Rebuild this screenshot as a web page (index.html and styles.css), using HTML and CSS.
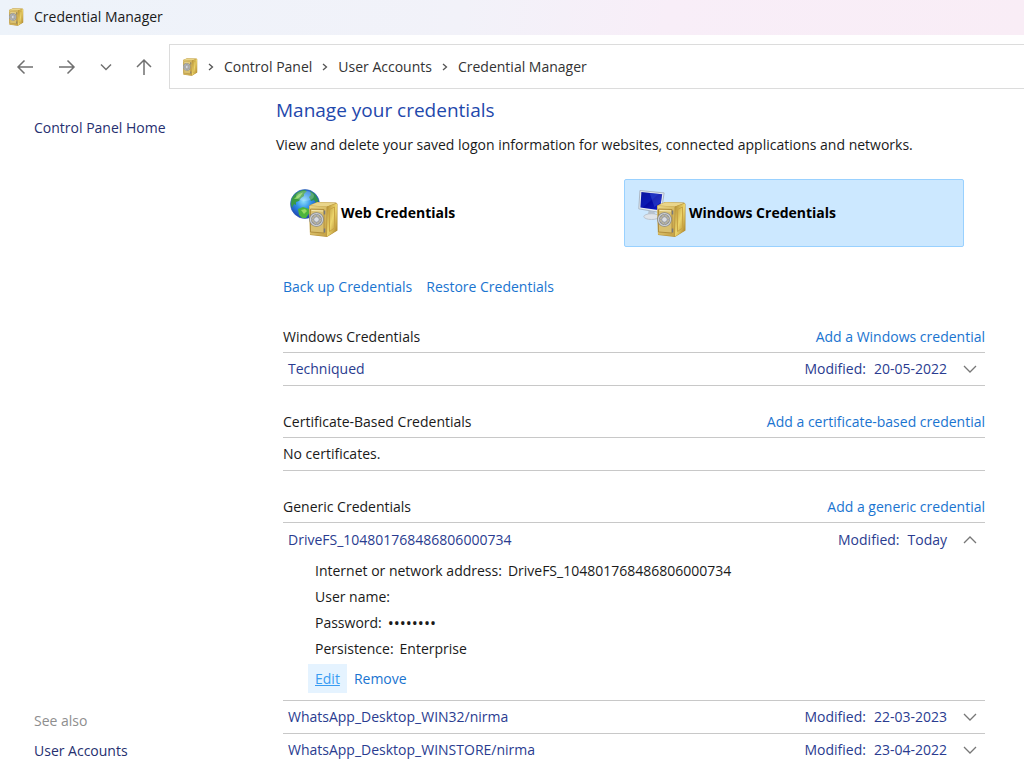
FILE: index.html
```html
<!DOCTYPE html>
<html lang="en">
<head>
  <meta charset="UTF-8">
  <meta name="viewport" content="width=device-width, initial-scale=1.0">
  <title>Credential Manager</title>
  <link rel="stylesheet" href="styles.css">
</head>
<body>

<!-- shared icons -->
<svg class="sprite" aria-hidden="true">
  <defs>
    <linearGradient id="goldFront" x1="0" y1="0" x2="1" y2="1">
      <stop offset="0" stop-color="#ecd98a"/>
      <stop offset="0.5" stop-color="#d8bd66"/>
      <stop offset="1" stop-color="#c4a044"/>
    </linearGradient>
    <linearGradient id="goldSide" x1="0" y1="0" x2="1" y2="1">
      <stop offset="0" stop-color="#b08a30"/>
      <stop offset="0.5" stop-color="#ecd56c"/>
      <stop offset="1" stop-color="#a67b22"/>
    </linearGradient>
    <radialGradient id="ocean" cx="0.45" cy="0.4" r="0.6">
      <stop offset="0" stop-color="#8fe0fa"/>
      <stop offset="0.45" stop-color="#2f8fe8"/>
      <stop offset="1" stop-color="#1d3fae"/>
    </radialGradient>
    <linearGradient id="screen" x1="0" y1="0" x2="1" y2="1">
      <stop offset="0" stop-color="#0a149c"/>
      <stop offset="0.45" stop-color="#0a18b4"/>
      <stop offset="0.5" stop-color="#0509a0"/>
      <stop offset="1" stop-color="#1020cc"/>
    </linearGradient>
  </defs>
  <symbol id="safe" viewBox="0 0 30 36">
    <path d="M1 4 9 0.500 28 1 29.500 2.500V29L19 35.500 2 33.500Z" fill="#b8933c"/>
    <path d="M1.500 4 9.500 0.800 28 1.500 19 5Z" fill="#e9d58a"/>
    <path d="M19 5 29 2V28.700L19 35Z" fill="url(#goldSide)"/>
    <path d="M21.500 8 26.500 5.500V26.500L21.500 30Z" fill="none" stroke="#c9a343"/>
    <path d="M1.500 4.500 18.500 5V34.800L2 33Z" fill="url(#goldFront)"/>
    <path d="M2.500 7.500 16 8V31.500L2.500 30.500Z" fill="#d9c070" stroke="#b28f3c"/>
    <path d="M3.500 9 15 9.500" stroke="#f7ebb4"/>
    <path d="M16.500 9V13M16.500 27V31" stroke="#77787c" stroke-width="1.500"/>
    <circle cx="8.500" cy="18" r="6" fill="#bdb79e" stroke="#85878b" stroke-width="2.600"/>
    <circle cx="8.500" cy="18" r="6" fill="none" stroke="#cdd0d4" stroke-width="1.200"/>
    <path d="M8.500 12.500V23.500M3 18H14M5 14.500 12 21.500M12 14.500 5 21.500" stroke="#a0a3a8"/>
    <circle cx="8.500" cy="18" r="2.800" fill="#d9dce2" stroke="#95989e"/>
  </symbol>
  <symbol id="globe" viewBox="0 0 30 30">
    <circle cx="15" cy="15" r="14.500" fill="url(#ocean)" stroke="#2d5cb4" stroke-width="0.600"/>
    <path d="M1.500 10C4 5 8 2 14 1L17 2 14 5 14 7 11 9 9 12 6 13 6 16 4 15 2 19 1 15Z" fill="#3b9a45"/>
    <path d="M4 10 9 5 13 3.500 10 8 7 10Z" fill="#86d25a"/>
    <path d="M20 1.800 25 5 28.500 11 27 15 24 11 21 12 19 8 21 6Z" fill="#2f9150"/>
    <path d="M8 20 13 18 19 20 20 23 16 29 12 29 9 26Z" fill="#4db43d"/>
    <path d="M11 21 15 20 17 22 14 25Z" fill="#98da62"/>
    <ellipse cx="15" cy="7" rx="9" ry="5" fill="#fff" opacity="0.22"/>
  </symbol>
  <symbol id="monitor" viewBox="0 0 30 32">
    <path d="M11 22 17 23 18 27 10 27Z" fill="#b8c2ce"/>
    <ellipse cx="14" cy="28" rx="8" ry="3" fill="#dfe4ea" stroke="#b9c2cc"/>
    <path d="M2 1 27 3.500 24 24 0.800 20Z" fill="#e6ebf1" stroke="#a9b5c3"/>
    <path d="M3.500 2.500 25 5 22.500 21.500 2.500 18.500Z" fill="url(#screen)"/>
    <path d="M12 3.500 25 5 24 13 17 18Z" fill="#5876ec" opacity="0.3"/>
  </symbol>
  <symbol id="down" viewBox="0 0 14 8">
    <path d="M1 1 7 7 13 1" fill="none" stroke="currentColor" stroke-width="1.300"/>
  </symbol>
  <symbol id="up" viewBox="0 0 14 8">
    <path d="M1 7 7 1 13 7" fill="none" stroke="currentColor" stroke-width="1.300"/>
  </symbol>
  <symbol id="sep" viewBox="0 0 6 8">
    <path d="M1 1 4.500 4 1 7" fill="none" stroke="currentColor" stroke-width="1.300"/>
  </symbol>
</svg>

<header class="titlebar">
  <svg class="icon-safe"><use href="#safe"/></svg>
  <span>Credential Manager</span>
</header>

<nav class="toolbar">
  <div class="nav-buttons">
    <button aria-label="Back"><svg width="18" height="16" viewBox="0 0 18 16"><path d="M17 8H2M8.500 1.500 2 8 8.500 14.500"/></svg></button>
    <button aria-label="Forward"><svg width="18" height="16" viewBox="0 0 18 16"><path d="M1 8H16M9.500 1.500 16 8 9.500 14.500"/></svg></button>
    <button aria-label="Recent locations"><svg width="12" height="8" viewBox="0 0 12 8"><path d="M1 1.500 6 6.500 11 1.500"/></svg></button>
    <button aria-label="Up"><svg width="16" height="18" viewBox="0 0 16 18"><path d="M8 17V2M1 9 8 2 15 9"/></svg></button>
  </div>
  <div class="address">
    <svg class="icon-safe"><use href="#safe"/></svg>
    <svg class="sep"><use href="#sep"/></svg>
    <a href="#">Control Panel</a>
    <svg class="sep"><use href="#sep"/></svg>
    <a href="#">User Accounts</a>
    <svg class="sep"><use href="#sep"/></svg>
    <a href="#">Credential Manager</a>
  </div>
</nav>

<div class="content">
  <aside class="sidebar">
    <a href="#">Control Panel Home</a>
    <div class="see-also">
      <h2>See also</h2>
      <a href="#">User Accounts</a>
    </div>
  </aside>

  <main>
    <h1>Manage your credentials</h1>
    <p class="intro">View and delete your saved logon information for websites, connected applications and networks.</p>

    <div class="vaults">
      <button class="vault">
        <span class="vault-icon"><svg class="globe"><use href="#globe"/></svg><svg class="vault-safe"><use href="#safe"/></svg></span>
        Web Credentials
      </button>
      <button class="vault selected">
        <span class="vault-icon"><svg class="monitor"><use href="#monitor"/></svg><svg class="vault-safe"><use href="#safe"/></svg></span>
        Windows Credentials
      </button>
    </div>

    <div class="tasks">
      <a href="#">Back up Credentials</a>
      <a href="#">Restore Credentials</a>
    </div>

    <section class="group">
      <div class="group-head">
        <h2>Windows Credentials</h2>
        <a href="#">Add a Windows credential</a>
      </div>
      <button class="row">
        <span class="name">Techniqued</span>
        <span>Modified:</span><span>20-05-2022</span>
        <svg class="chevron"><use href="#down"/></svg>
      </button>
    </section>

    <section class="group">
      <div class="group-head">
        <h2>Certificate-Based Credentials</h2>
        <a href="#">Add a certificate-based credential</a>
      </div>
      <p class="empty">No certificates.</p>
    </section>

    <section class="group">
      <div class="group-head">
        <h2>Generic Credentials</h2>
        <a href="#">Add a generic credential</a>
      </div>
      <button class="row open" aria-expanded="true">
        <span class="name">DriveFS_104801768486806000734</span>
        <span>Modified:</span><span>Today</span>
        <svg class="chevron"><use href="#up"/></svg>
      </button>
      <div class="details">
        <dl>
          <div><dt>Internet or network address:</dt><dd>DriveFS_104801768486806000734</dd></div>
          <div><dt>User name:</dt><dd></dd></div>
          <div><dt>Password:</dt><dd class="dots">••••••••</dd></div>
          <div><dt>Persistence:</dt><dd>Enterprise</dd></div>
        </dl>
        <div class="actions">
          <a class="active" href="#">Edit</a>
          <a href="#">Remove</a>
        </div>
      </div>
      <button class="row">
        <span class="name">WhatsApp_Desktop_WIN32/nirma</span>
        <span>Modified:</span><span>22-03-2023</span>
        <svg class="chevron"><use href="#down"/></svg>
      </button>
      <button class="row">
        <span class="name">WhatsApp_Desktop_WINSTORE/nirma</span>
        <span>Modified:</span><span>23-04-2022</span>
        <svg class="chevron"><use href="#down"/></svg>
      </button>
    </section>
  </main>
</div>

</body>
</html>
```

FILE: styles.css
```css
* { box-sizing: border-box; margin: 0; padding: 0; }
body {
  display: flex;
  flex-direction: column;
  height: 100vh;
  overflow: hidden;
  font-family: "Open Sans", "Noto Sans", sans-serif;
  font-size: 14px;
  line-height: 20px;
  color: #1a1a1a;
  background: #fff;
}
a { color: #1a74d0; text-decoration: none; }
button {
  font: inherit;
  color: inherit;
  background: none;
  border: none;
  cursor: pointer;
}
h2 { font-size: 14px; font-weight: normal; }
.sprite { position: absolute; width: 0; height: 0; }

.titlebar {
  display: flex;
  flex-shrink: 0;
  align-items: center;
  gap: 10px;
  height: 35px;
  padding: 0 8px 2px;
  background: linear-gradient(100deg, #edf3fa, #f2f2f9 45%, #f8eef8 65%, #f9edf6);
}
.icon-safe { width: 16px; height: 18px; }

.toolbar {
  display: flex;
  flex-shrink: 0;
  align-items: center;
  height: 63px;
}
.nav-buttons {
  display: flex;
  align-items: center;
  gap: 24px;
  width: 169px;
  padding-left: 16px;
}
.nav-buttons button { display: flex; }
.nav-buttons path { fill: none; stroke: #707070; stroke-width: 1.5; }
.address {
  display: flex;
  flex: 1;
  align-items: center;
  gap: 10px;
  height: 45px;
  padding-left: 12px;
  border: 1px solid #dcdcdc;
  border-right: none;
}
.address a { color: #333; }
.sep { width: 6px; height: 8px; color: #555; }

.content { display: flex; flex: 1; min-height: 0; }
.sidebar {
  display: flex;
  flex-direction: column;
  justify-content: space-between;
  width: 276px;
  padding: 20px 34px 4px;
}
.sidebar a { color: #262f70; }
.see-also h2 { margin-bottom: 10px; color: #8e8e8e; }
.see-also a { display: block; }

main { flex: 1; padding-right: 39px; }
h1 {
  font-size: 19px;
  font-weight: normal;
  line-height: 24px;
  color: #1f48ac;
}
.intro { margin-top: 13px; }

.vaults {
  display: grid;
  grid-template-columns: 1fr 1fr;
  gap: 8px;
  margin: 24px 21px 0 0;
}
.vault {
  display: flex;
  align-items: center;
  gap: 3px;
  height: 68px;
  padding: 0 13px;
  font-weight: bold;
  color: #000;
  border: 1px solid transparent;
}
.vault.selected {
  background: #cce8ff;
  border-color: #99d1ff;
  border-radius: 2px;
}
.vault-icon { position: relative; width: 48px; height: 50px; }
.globe { position: absolute; left: 0; top: 1px; width: 30px; height: 30px; }
.monitor { position: absolute; left: 0; top: 1px; width: 29px; height: 32px; }
.vault-safe { position: absolute; right: 0; bottom: 0; width: 30px; height: 37px; }

.tasks { display: flex; gap: 14px; margin: 30px 0 25px 7px; }

.group { margin: 0 0 21px 7px; }
.group-head {
  display: flex;
  justify-content: space-between;
  align-items: center;
  height: 31px;
  border-bottom: 1px solid #c8c8c8;
}
.row, .empty {
  display: flex;
  align-items: center;
  gap: 8px;
  width: 100%;
  height: 33px;
  border-bottom: 1px solid #c8c8c8;
}
.row { padding: 0 8px 0 5px; color: #2a3c90; }
.row.open { border-bottom: none; }
.name { flex: 1; text-align: left; }
.chevron { width: 14px; height: 8px; margin-left: 8px; color: #777; }

.details {
  padding: 2px 0 7px 25px;
  border-bottom: 1px solid #c8c8c8;
}
.details dl { padding-left: 7px; line-height: 26px; }
.details dl div { display: flex; gap: 6px; height: 26px; }
.dots { font-size: 16px; }
.actions { display: flex; margin-top: 2px; }
.actions a { padding: 5px 7px; line-height: 19px; }
.actions .active {
  color: #3a9cf2;
  text-decoration: underline;
  background: #e5f3ff;
}
```
